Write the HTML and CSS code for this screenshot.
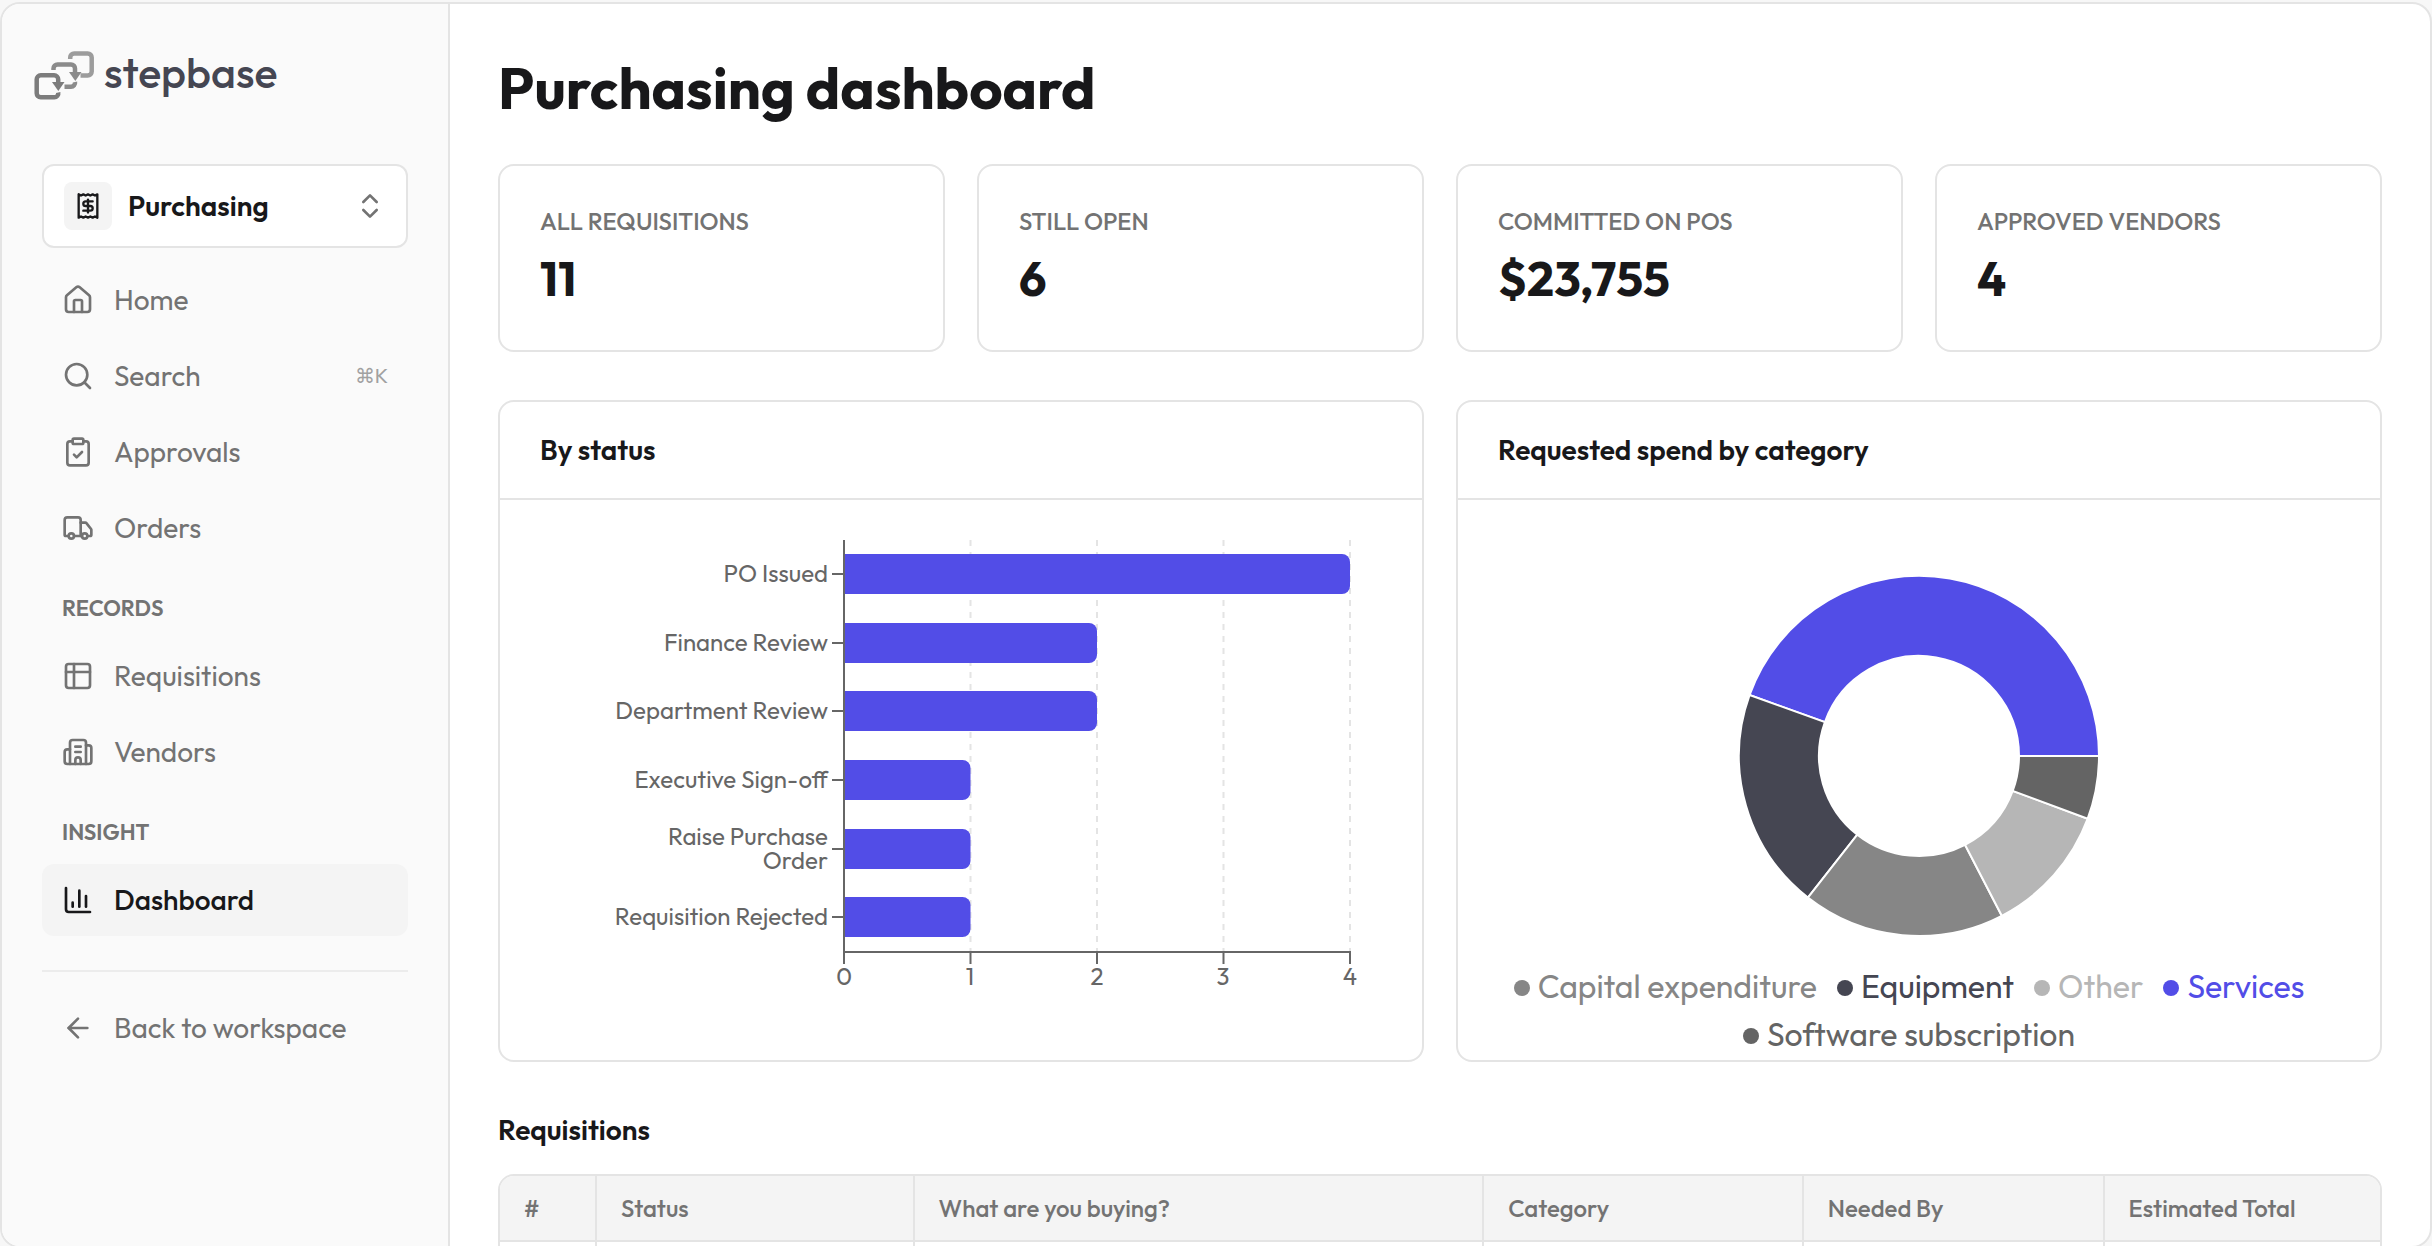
FILE: index.html
```html
<!DOCTYPE html>
<html lang="en">
<head>
  <meta charset="UTF-8">
  <meta name="viewport" content="width=device-width, initial-scale=1.0">
  <title>Purchasing dashboard</title>
  <link rel="stylesheet" href="styles.css">
</head>
<body>
  <div class="app">
    <aside class="sidebar">
      <a class="logo" href="#">
        <svg class="logo-mark" viewBox="0 0 62 50" fill="none" stroke-width="4.5" aria-hidden="true">
          <g stroke="#9c9c9c">
            <path d="M36.2 9V7.500a4 4 0 0 1 4-4H53.700a4 4 0 0 1 4 4V21.500a4 4 0 0 1-4 4H46.500"/>
          </g>
          <g stroke="#8b8b8b">
            <path d="M19.500 20V18.500a4 4 0 0 1 4-4H37a4 4 0 0 1 4 4V22"/>
            <path d="M41 32a4 4 0 0 1-4 4.700H30.500"/>
            <path d="M35 22h12.500l-6.200 9z" fill="#8b8b8b" stroke="none"/>
          </g>
          <g stroke="#7c7c7c">
            <path d="M24.200 33V29.300a4 4 0 0 0-4-4H6.700a4 4 0 0 0-4 4V43.300a4 4 0 0 0 4 4H20.200a4 4 0 0 0 4-4.800"/>
            <path d="M18 32h12.500l-6.200 9z" fill="#7c7c7c" stroke="none"/>
          </g>
        </svg>
        <span>stepbase</span>
      </a>

      <button class="switcher" type="button">
        <span class="switcher-icon">
          <svg class="icon-small" viewBox="0 0 24 24"><path d="M4 2v20l2-1 2 1 2-1 2 1 2-1 2 1 2-1 2 1V2l-2 1-2-1-2 1-2-1-2 1-2-1-2 1Z"/><path d="M16 8h-6a2 2 0 1 0 0 4h4a2 2 0 1 1 0 4H8"/><path d="M12 17.500v-11"/></svg>
        </span>
        <span class="switcher-name">Purchasing</span>
        <svg class="icon" viewBox="0 0 24 24"><path d="m7 15 5 5 5-5"/><path d="m7 9 5-5 5 5"/></svg>
      </button>

      <nav class="nav">
        <a class="nav-item" href="#">
          <svg class="icon" viewBox="0 0 24 24"><path d="M15 21v-8a1 1 0 0 0-1-1h-4a1 1 0 0 0-1 1v8"/><path d="M3 10a2 2 0 0 1 .709-1.528l7-5.999a2 2 0 0 1 2.582 0l7 5.999A2 2 0 0 1 21 10v9a2 2 0 0 1-2 2H5a2 2 0 0 1-2-2z"/></svg>
          <span>Home</span>
        </a>
        <a class="nav-item" href="#">
          <svg class="icon" viewBox="0 0 24 24"><circle cx="11" cy="11" r="8"/><path d="m21 21-4.300-4.300"/></svg>
          <span>Search</span>
          <kbd>⌘K</kbd>
        </a>
        <a class="nav-item" href="#">
          <svg class="icon" viewBox="0 0 24 24"><rect x="8" y="2" width="8" height="4" rx="1"/><path d="M16 4h2a2 2 0 0 1 2 2v14a2 2 0 0 1-2 2H6a2 2 0 0 1-2-2V6a2 2 0 0 1 2-2h2"/><path d="m9 14 2 2 4-4"/></svg>
          <span>Approvals</span>
        </a>
        <a class="nav-item" href="#">
          <svg class="icon" viewBox="0 0 24 24"><path d="M14 18V6a2 2 0 0 0-2-2H4a2 2 0 0 0-2 2v11a1 1 0 0 0 1 1h2"/><path d="M15 18H9"/><path d="M19 18h2a1 1 0 0 0 1-1v-3.650a1 1 0 0 0-.22-.624l-3.480-4.350A1 1 0 0 0 17.520 8H14"/><circle cx="17" cy="18" r="2"/><circle cx="7" cy="18" r="2"/></svg>
          <span>Orders</span>
        </a>

        <h2 class="nav-label">Records</h2>
        <a class="nav-item" href="#">
          <svg class="icon" viewBox="0 0 24 24"><rect x="3" y="3" width="18" height="18" rx="2"/><path d="M3 9h18"/><path d="M9 3v18"/></svg>
          <span>Requisitions</span>
        </a>
        <a class="nav-item" href="#">
          <svg class="icon" viewBox="0 0 24 24"><path d="M10 12h4"/><path d="M10 8h4"/><path d="M14 21v-3a2 2 0 0 0-4 0v3"/><path d="M6 10H4a2 2 0 0 0-2 2v7a2 2 0 0 0 2 2h16a2 2 0 0 0 2-2V9a2 2 0 0 0-2-2h-2"/><path d="M6 21V5a2 2 0 0 1 2-2h8a2 2 0 0 1 2 2v16"/></svg>
          <span>Vendors</span>
        </a>

        <h2 class="nav-label">Insight</h2>
        <a class="nav-item active" href="#" aria-current="page">
          <svg class="icon" viewBox="0 0 24 24"><path d="M3 3v16a2 2 0 0 0 2 2h16"/><path d="M18 17V9"/><path d="M13 17V5"/><path d="M8 17v-3"/></svg>
          <span>Dashboard</span>
        </a>
      </nav>

      <div class="sidebar-footer">
        <a class="nav-item" href="#">
          <svg class="icon" viewBox="0 0 24 24"><path d="m12 19-7-7 7-7"/><path d="M19 12H5"/></svg>
          <span>Back to workspace</span>
        </a>
      </div>
    </aside>

    <main class="main">
      <h1>Purchasing dashboard</h1>

      <section class="stats">
        <div class="card stat">
          <div class="stat-label">All requisitions</div>
          <div class="stat-value">11</div>
        </div>
        <div class="card stat">
          <div class="stat-label">Still open</div>
          <div class="stat-value">6</div>
        </div>
        <div class="card stat">
          <div class="stat-label">Committed on POs</div>
          <div class="stat-value">$23,755</div>
        </div>
        <div class="card stat">
          <div class="stat-label">Approved vendors</div>
          <div class="stat-value">4</div>
        </div>
      </section>

      <section class="charts">
        <div class="card">
          <h2 class="card-title">By status</h2>
          <div class="card-body">
            <svg class="bar-chart" viewBox="0 0 842 480" role="img" aria-label="Requisitions by status">
              <g class="grid">
                <path d="M430.500 0V412M557 0V412M683.500 0V412M810 0V412"/>
              </g>
              <g class="bars">
                <path d="M304 14H802a8 8 0 0 1 8 8V46a8 8 0 0 1-8 8H304z"/>
                <path d="M304 83H549a8 8 0 0 1 8 8V115a8 8 0 0 1-8 8H304z"/>
                <path d="M304 151H549a8 8 0 0 1 8 8V183a8 8 0 0 1-8 8H304z"/>
                <path d="M304 220H422.500a8 8 0 0 1 8 8V252a8 8 0 0 1-8 8H304z"/>
                <path d="M304 289H422.500a8 8 0 0 1 8 8V321a8 8 0 0 1-8 8H304z"/>
                <path d="M304 357H422.500a8 8 0 0 1 8 8V389a8 8 0 0 1-8 8H304z"/>
              </g>
              <g class="axis">
                <path d="M304 0V424M304 412H811M430.500 412V424M557 412V424M683.500 412V424M810 412V424"/>
                <path d="M292 34H304M292 103H304M292 171H304M292 240H304M292 309H304M292 377H304"/>
              </g>
              <g class="labels-y">
                <text x="288" y="42">PO Issued</text>
                <text x="288" y="111">Finance Review</text>
                <text x="288" y="179">Department Review</text>
                <text x="288" y="248">Executive Sign-off</text>
                <text><tspan x="288" y="305">Raise Purchase</tspan><tspan x="288" dy="24">Order</tspan></text>
                <text x="288" y="385">Requisition Rejected</text>
              </g>
              <g class="labels-x">
                <text x="304" y="445">0</text>
                <text x="430" y="445">1</text>
                <text x="557" y="445">2</text>
                <text x="683" y="445">3</text>
                <text x="810" y="445">4</text>
              </g>
            </svg>
          </div>
        </div>

        <div class="card">
          <h2 class="card-title">Requested spend by category</h2>
          <div class="card-body donut-body">
            <svg class="donut" viewBox="0 0 842 422" role="img" aria-label="Requested spend by category">
              <g transform="translate(421 216)">
                <path class="fill-services" d="M180 0A180 180 0 0 0 -169.400 -61L-94.100 -33.900A100 100 0 0 1 100 0Z"/>
                <path class="fill-equipment" d="M-169.400 -61A180 180 0 0 0 -111.100 141.600L-61.700 78.700A100 100 0 0 1 -94.100 -33.900Z"/>
                <path class="fill-capital" d="M-111.100 141.600A180 180 0 0 0 82.800 159.800L46 88.800A100 100 0 0 1 -61.700 78.700Z"/>
                <path class="fill-other" d="M82.800 159.800A180 180 0 0 0 168.700 62.700L93.700 34.900A100 100 0 0 1 46 88.800Z"/>
                <path class="fill-software" d="M168.700 62.700A180 180 0 0 0 180 0L100 0A100 100 0 0 1 93.700 34.900Z"/>
              </g>
            </svg>
            <ul class="legend">
              <li class="capital">Capital expenditure</li>
              <li class="equipment">Equipment</li>
              <li class="other">Other</li>
              <li class="services">Services</li>
              <li class="software">Software subscription</li>
            </ul>
          </div>
        </div>
      </section>

      <section class="records">
        <h2>Requisitions</h2>
        <div class="table-wrap">
          <table>
            <thead>
              <tr>
                <th class="col-id">#</th>
                <th class="col-status">Status</th>
                <th class="col-item">What are you buying?</th>
                <th class="col-category">Category</th>
                <th class="col-date">Needed By</th>
                <th>Estimated Total</th>
              </tr>
            </thead>
            <tbody>
              <tr><td></td><td></td><td></td><td></td><td></td><td></td></tr>
            </tbody>
          </table>
        </div>
      </section>
    </main>
  </div>
</body>
</html>
```

FILE: styles.css
```css
* {
  box-sizing: border-box;
}

body {
  margin: 0;
  height: 100vh;
  overflow: hidden;
  background: #f7f7f7;
  color: #18181a;
  font-family: Outfit, Lato, sans-serif;
  font-size: 28px;
}

h1,
h2 {
  margin: 0;
}

a {
  color: inherit;
  text-decoration: none;
}

.app {
  display: flex;
  height: 100vh;
  margin-top: 2px;
  border: 2px solid #e4e4e4;
  border-radius: 20px;
  background: #fff;
  overflow: hidden;
}

/* Sidebar */

.sidebar {
  flex: 0 0 448px;
  padding: 46px 40px;
  border-right: 2px solid #e4e4e4;
  background: #fafafa;
}

.logo {
  display: flex;
  align-items: flex-start;
  gap: 8px;
  height: 50px;
  margin: 0 0 64px -8px;
  color: #454652;
  font-size: 43px;
  font-weight: 500;
  line-height: 44px;
}

.logo-mark {
  width: 62px;
  height: 50px;
}

.icon,
.icon-small {
  flex: none;
  width: 32px;
  height: 32px;
  fill: none;
  stroke: currentColor;
  stroke-width: 2;
  stroke-linecap: round;
  stroke-linejoin: round;
}

.icon-small {
  width: 28px;
  height: 28px;
}

.switcher {
  display: flex;
  align-items: center;
  width: 100%;
  height: 84px;
  padding: 0 20px;
  border: 2px solid #e4e4e4;
  border-radius: 12px;
  background: #fff;
  color: #737373;
  font-family: inherit;
  font-size: 28px;
  line-height: 34px;
  cursor: pointer;
}

.switcher-icon {
  display: flex;
  align-items: center;
  justify-content: center;
  width: 48px;
  height: 48px;
  border-radius: 8px;
  background: #f4f4f4;
  color: #18181a;
}

.switcher-name {
  flex: 1;
  margin-left: 16px;
  color: #18181a;
  font-weight: 600;
  text-align: left;
}

.nav {
  display: flex;
  flex-direction: column;
  gap: 4px;
  margin-top: 16px;
}

.nav-item {
  display: flex;
  align-items: center;
  gap: 20px;
  height: 72px;
  padding: 0 20px;
  border-radius: 12px;
  color: #737373;
  line-height: 34px;
}

.nav-item.active {
  background: #f4f4f4;
  color: #18181a;
  font-weight: 500;
}

.nav-item kbd {
  margin-left: auto;
  color: #a1a1a1;
  font-family: inherit;
  font-size: 20px;
}

.nav-label {
  padding: 12px 20px 0;
  color: #737373;
  font-size: 22px;
  font-weight: 600;
  line-height: 56px;
  text-transform: uppercase;
}

.sidebar-footer {
  margin-top: 34px;
  padding-top: 20px;
  border-top: 2px solid #ececec;
}

/* Main */

.main {
  flex: 1;
  min-width: 0;
  padding: 48px;
}

h1 {
  font-size: 58px;
  font-weight: 700;
  line-height: 72px;
}

.card {
  border: 2px solid #e4e4e4;
  border-radius: 16px;
  background: #fff;
  overflow: hidden;
}

.stats {
  display: grid;
  grid-template-columns: repeat(4, 1fr);
  gap: 32px;
  margin-top: 40px;
}

.stat {
  padding: 39px 40px 44px;
}

.stat-label {
  color: #737373;
  font-size: 24px;
  font-weight: 500;
  line-height: 32px;
  text-transform: uppercase;
}

.stat-value {
  margin-top: 13px;
  font-size: 48px;
  font-weight: 700;
  line-height: 56px;
}

.charts {
  display: grid;
  grid-template-columns: repeat(2, 1fr);
  gap: 32px;
  margin-top: 48px;
}

.card-title {
  padding: 0 40px;
  border-bottom: 2px solid #e4e4e4;
  font-size: 28px;
  font-weight: 600;
  line-height: 96px;
}

.card-body {
  padding: 40px;
}

.bar-chart,
.donut {
  display: block;
  width: 100%;
}

.grid path {
  fill: none;
  stroke: #e4e4e4;
  stroke-width: 2;
  stroke-dasharray: 6 6;
}

.bars path {
  fill: #524de7;
}

.axis path {
  fill: none;
  stroke: #666;
  stroke-width: 2;
}

.bar-chart text {
  fill: #666;
  font-size: 24px;
}

.labels-y {
  text-anchor: end;
}

.labels-x {
  text-anchor: middle;
}

.donut-body {
  padding-bottom: 2px;
}

.donut path {
  stroke: #fff;
  stroke-width: 2;
}

.fill-services {
  fill: #524de7;
}

.fill-equipment {
  fill: #454652;
}

.fill-capital {
  fill: #868686;
}

.fill-other {
  fill: #b6b6b6;
}

.fill-software {
  fill: #646464;
}

.legend {
  display: flex;
  flex-wrap: wrap;
  justify-content: center;
  margin: 0;
  padding: 0;
  list-style: none;
  font-size: 32px;
  line-height: 48px;
}

.legend li {
  display: flex;
  align-items: center;
  gap: 8px;
  margin-right: 20px;
}

.legend li::before {
  content: "";
  width: 16px;
  height: 16px;
  margin-top: 4px;
  border-radius: 50%;
  background: currentColor;
}

.capital {
  color: #868686;
}

.equipment {
  color: #454652;
}

.other {
  color: #b6b6b6;
}

.services {
  color: #524de7;
}

.software {
  color: #646464;
}

/* Requisitions table */

.records {
  margin-top: 48px;
}

.records h2 {
  font-size: 28px;
  font-weight: 600;
  line-height: 40px;
}

.table-wrap {
  margin-top: 24px;
  border: 2px solid #e4e4e4;
  border-radius: 16px;
  overflow: hidden;
}

table {
  width: 100%;
  border-collapse: collapse;
  table-layout: fixed;
}

th {
  height: 65px;
  padding: 0 24px;
  border-bottom: 2px solid #e4e4e4;
  background: #f4f4f4;
  color: #737373;
  font-size: 24px;
  font-weight: 500;
  text-align: left;
}

td {
  height: 72px;
}

th + th,
td + td {
  border-left: 2px solid #e4e4e4;
}

.col-id {
  width: 5.1%;
}

.col-status {
  width: 16.9%;
}

.col-item {
  width: 30.3%;
}

.col-category {
  width: 17%;
}

.col-date {
  width: 16%;
}
```
